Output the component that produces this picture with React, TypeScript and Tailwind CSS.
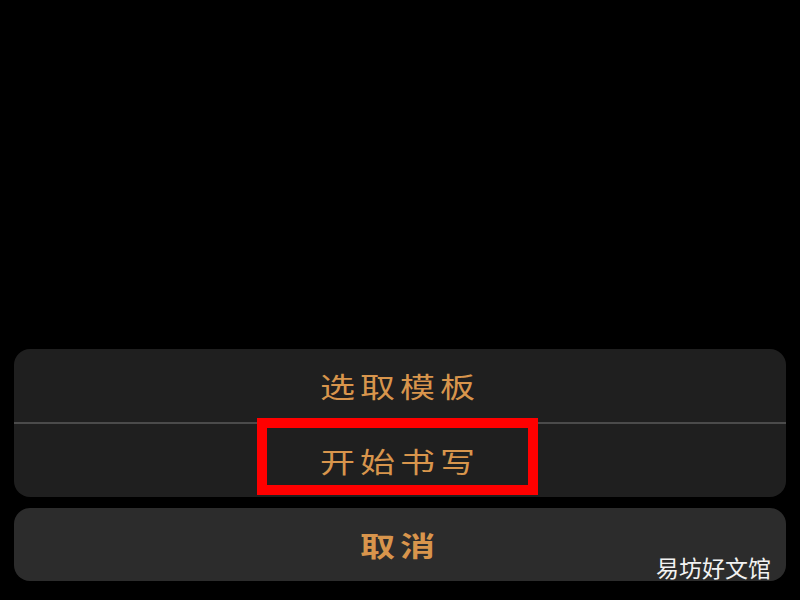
export default function App() {
  const font = { fontFamily: '"Noto Sans CJK SC", "Noto Sans", sans-serif' }

  return (
    <div
      className="relative flex h-[600px] w-[800px] flex-col justify-end gap-[11px] bg-black px-[14px] pb-[19px]"
      style={font}
    >
      {/* Action sheet options */}
      <div className="flex flex-col rounded-[16px] bg-[#1f1f1f]">
        <div className="flex h-[73px] items-center justify-center">
          <span className="inline-block scale-x-125 text-[28px] tracking-[4px] text-[#d8954c]">选取模板</span>
        </div>
        <div className="h-[2px] bg-[#4b4b4b]" />
        <div className="relative flex h-[73px] items-center justify-center">
          <span className="inline-block scale-x-125 text-[28px] tracking-[4px] text-[#d8954c]">开始书写</span>
          {/* Highlight box */}
          <div className="absolute left-[243px] top-[-6px] h-[77px] w-[281px] border-[10px] border-[#ff0000]" />
        </div>
      </div>

      {/* Cancel */}
      <div className="flex h-[73px] items-center justify-center rounded-[16px] bg-[#2c2c2c]">
        <span className="inline-block scale-x-125 text-[28px] font-bold tracking-[4px] text-[#d8954c]">取消</span>
      </div>

      {/* Watermark */}
      <div className="absolute bottom-[21px] right-[29px] text-[23px] leading-none text-[#f2f2f2]">易坊好文馆</div>
    </div>
  )
}
